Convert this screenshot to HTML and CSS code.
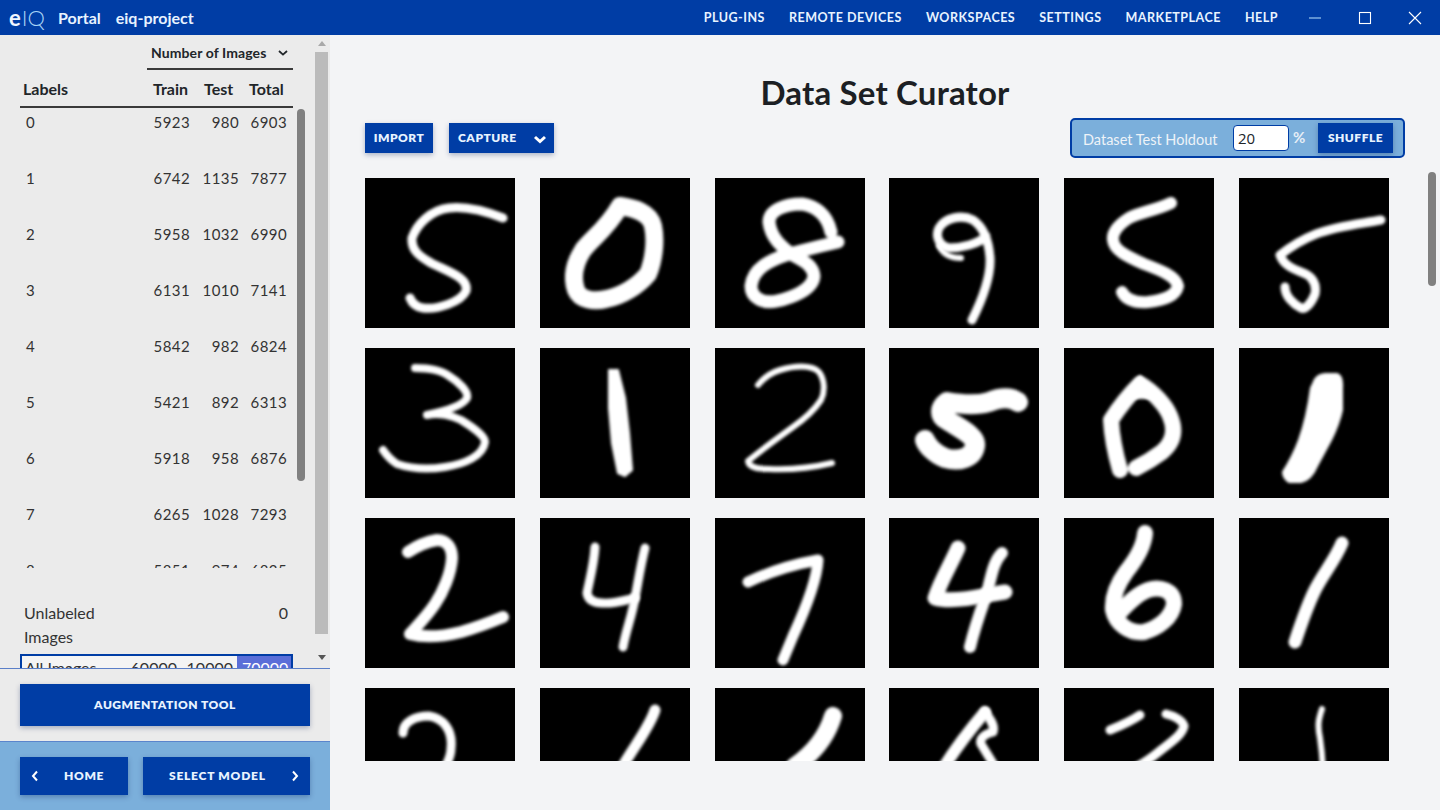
FILE: index.html
```html
<!DOCTYPE html>
<html lang="en">
<head>
<meta charset="utf-8">
<title>eIQ Portal</title>
<link rel="stylesheet" href="styles.css">
</head>
<body>
<div class="app">
  <header class="topbar">
    <div class="logo"><span class="logo-e">e</span><span class="logo-iq">IQ</span></div>
    <span class="crumb crumb-portal">Portal</span>
    <span class="crumb">eiq-project</span>
    <nav class="nav">
      <a>PLUG-INS</a><a>REMOTE DEVICES</a><a>WORKSPACES</a><a>SETTINGS</a><a>MARKETPLACE</a><a>HELP</a>
    </nav>
    <div class="winctl">
      <svg class="winicon" viewBox="0 0 14 14"><path d="M1 7h12" stroke="#9cc8ee" stroke-width="1.2" fill="none"/></svg>
      <svg class="winicon" viewBox="0 0 14 14"><rect x="1.5" y="1.5" width="11" height="11" stroke="#fff" stroke-width="1.1" fill="none"/></svg>
      <svg class="winicon" viewBox="0 0 14 14"><path d="M1 1l12 12M13 1L1 13" stroke="#fff" stroke-width="1.1" fill="none"/></svg>
    </div>
  </header>
  <div class="body">
    <aside class="side">
      <div class="side-top">
        <div class="panel">
          <div class="sortbar"><span>Number of Images</span>
            <svg class="sortchev" viewBox="0 0 10 6"><path d="M1 1l4 3.6L9 1" fill="none" stroke="#212529" stroke-width="1.8"/></svg>
          </div>
          <div class="headrow">
            <span class="h-label">Labels</span><span class="h-train">Train</span><span class="h-test">Test</span><span class="h-total">Total</span>
          </div>
          <div class="list">
            <div class="row"><span>0</span><span>5923</span><span>980</span><span>6903</span></div>
            <div class="row"><span>1</span><span>6742</span><span>1135</span><span>7877</span></div>
            <div class="row"><span>2</span><span>5958</span><span>1032</span><span>6990</span></div>
            <div class="row"><span>3</span><span>6131</span><span>1010</span><span>7141</span></div>
            <div class="row"><span>4</span><span>5842</span><span>982</span><span>6824</span></div>
            <div class="row"><span>5</span><span>5421</span><span>892</span><span>6313</span></div>
            <div class="row"><span>6</span><span>5918</span><span>958</span><span>6876</span></div>
            <div class="row"><span>7</span><span>6265</span><span>1028</span><span>7293</span></div>
            <div class="row"><span>8</span><span>5851</span><span>974</span><span>6825</span></div>
            <div class="row"><span>9</span><span>5949</span><span>1009</span><span>6958</span></div>
            <div class="thinbar"></div>
          </div>
          <div class="unlabeled"><span class="un-text">Unlabeled Images</span><span class="un-val">0</span></div>
          <div class="allrow"><span class="all-name">All Images</span><span class="all-n">60000</span><span class="all-n">10000</span><span class="all-total">70000</span></div>
        </div>
        <div class="rail">
          <i class="tri-up"></i>
          <div class="rail-thumb"></div>
          <i class="tri-down"></i>
        </div>
      </div>
      <div class="aug"><button class="btn btn-aug">AUGMENTATION TOOL</button></div>
      <div class="navfoot">
        <button class="btn btn-home">
          <svg class="navchev" viewBox="0 0 8 12"><path d="M6 1.5L2 6l4 4.5" fill="none" stroke="#fff" stroke-width="2"/></svg>
          <span>HOME</span>
        </button>
        <button class="btn btn-model">
          <span>SELECT MODEL</span>
          <svg class="navchev" viewBox="0 0 8 12"><path d="M2 1.5L6 6l-4 4.5" fill="none" stroke="#fff" stroke-width="2"/></svg>
        </button>
      </div>
    </aside>
    <main class="main">
      <h1 class="title">Data Set Curator</h1>
      <div class="toolbar">
        <div class="tools-left">
          <button class="btn btn-import">IMPORT</button>
          <button class="btn btn-capture"><span>CAPTURE</span>
            <svg class="capchev" viewBox="0 0 14 9"><path d="M2 2l5 4.5L12 2" fill="none" stroke="#fff" stroke-width="3"/></svg>
          </button>
        </div>
        <div class="holdout">
          <span class="holdout-label">Dataset Test Holdout</span>
          <input class="holdout-input" type="text" value="20">
          <span class="holdout-pct">%</span>
          <button class="btn btn-shuffle">SHUFFLE</button>
        </div>
      </div>
      <div class="gallery">
        <svg class="tile" viewBox="0 0 150 150"><path class="d" stroke-width="9" d="M138 40C120 33 100 28 84 30C66 32 52 46 47 60C46 72 54 78 66 85C84 94 104 100 101 113C96 124 72 132 58 130C51 129 47 125 45 120"/></svg>
        <svg class="tile" viewBox="0 0 150 150"><path class="d" stroke-width="18" d="M80 28C66 52 52 60 43 72C34 86 32 100 36 112C40 122 54 124 66 121C82 118 98 108 108 96C114 82 116 62 113 48C110 34 94 30 80 28Z"/></svg>
        <svg class="tile" viewBox="0 0 150 150"><path class="d" stroke-width="13" d="M123 64C105 68 90 72 74 76C55 82 38 90 36 108C36 120 48 126 62 123C76 120 98 112 99 98C98 86 86 82 76 76C66 68 56 60 54 44C54 32 70 26 87 26C100 28 112 36 116 54"/></svg>
        <svg class="tile" viewBox="0 0 150 150"><path class="d" stroke-width="9" d="M97 58C90 66 72 70 60 70C50 68 46 58 50 50C56 40 72 36 84 42C96 50 100 66 101 80C102 100 92 124 83 142"/><path class="d" stroke-width="6" d="M50 68C54 76 62 80 72 80"/></svg>
        <svg class="tile" viewBox="0 0 150 150"><path class="d" stroke-width="12" d="M107 25C90 33 76 34 65 40C54 47 48 55 49 62C50 72 62 78 80 86C96 92 112 98 114 108C112 118 100 122 84 124C70 125 62 122 58 114"/></svg>
        <svg class="tile" viewBox="0 0 150 150"><path class="d" stroke-width="9" d="M142 42C120 46 98 48 77 56C62 62 50 70 41 77C44 86 52 90 62 94C74 98 78 106 76 116C72 126 66 132 62 130C54 126 46 118 46 109"/></svg>

        <svg class="tile" viewBox="0 0 150 150"><path class="d" stroke-width="8" d="M50 20C62 20 76 22 84 28C94 34 104 44 102 50C98 58 76 64 62 67C74 64 88 68 96 72C106 78 120 88 120 94C118 108 100 116 80 119C62 122 44 120 32 116C26 112 22 108 18 102"/></svg>
        <svg class="tile" viewBox="0 0 150 150"><polygon class="fillg" points="69,22 78,22 85,50 89,85 92,122 85,128 78,125 72,95 69,60"/></svg>
        <svg class="tile" viewBox="0 0 150 150"><path class="d" stroke-width="6" d="M43 37C50 28 58 24 65 22C78 18 96 16 104 24C110 32 110 44 106 52C98 64 88 72 78 79C60 92 44 104 33 113C34 120 44 121 54 121C76 122 96 120 117 115"/></svg>
        <svg class="tile" viewBox="0 0 150 150"><path class="d" stroke-width="20" d="M129 54C120 48 110 50 100 54C86 58 70 56 58 54C50 60 50 68 58 72C70 80 88 88 86 98C84 110 70 114 56 110C46 106 38 98 36 92"/></svg>
        <svg class="tile" viewBox="0 0 150 150"><path class="d" stroke-width="16" d="M56 122C52 108 48 92 47 72C56 58 68 44 76 36C90 44 102 58 106 68C112 82 110 94 98 104C90 110 80 116 72 120"/><polygon class="fillg" points="76,28 62,50 90,50"/></svg>
        <svg class="tile" viewBox="0 0 150 150"><path class="fillg" d="M74 36Q76 27 86 26L98 26Q104 28 103 40L103 62Q100 76 92 92L78 118Q72 132 62 134L50 134Q44 130 44 124Q54 108 60 92Q68 70 72 40Z"/></svg>

        <svg class="tile" viewBox="0 0 150 150"><path class="d" stroke-width="12" d="M43 34C52 28 60 24 72 22C82 22 87 30 87 40C86 56 78 74 70 86C62 98 52 108 45 116C60 120 80 118 96 114C110 110 126 104 138 99"/></svg>
        <svg class="tile" viewBox="0 0 150 150"><path class="d" stroke-width="9" d="M55 29C54 46 50 60 47 75C48 82 54 85 62 85C74 86 86 82 95 80"/><path class="d" stroke-width="9" d="M105 30C100 50 98 65 95 80C92 98 86 112 83 129"/></svg>
        <svg class="tile" viewBox="0 0 150 150"><path class="d" stroke-width="11" d="M33 64C54 54 80 46 103 42C102 62 90 92 78 118L68 142"/></svg>
        <svg class="tile" viewBox="0 0 150 150"><path class="d" stroke-width="15" d="M69 30C62 46 52 62 46 80C60 84 84 80 98 77L116 74"/><path class="d" stroke-width="12" d="M113 35C104 44 102 60 98 75C92 92 86 108 81 129"/></svg>
        <svg class="tile" viewBox="0 0 150 150"><path class="d" stroke-width="16" d="M81 15C80 30 70 44 62 54C52 68 48 80 49 92C52 106 66 116 80 114C94 110 108 100 110 86C110 72 96 68 84 72C72 76 62 88 53 97"/></svg>
        <svg class="tile" viewBox="0 0 150 150"><path class="d" stroke-width="13" d="M103 25C96 42 84 56 76 72C68 88 62 106 56 124"/></svg>

        <svg class="tile" viewBox="0 0 150 150"><path class="d" stroke-width="9" d="M38 45C38 34 50 28 64 28C78 30 88 42 86 60C86 70 80 80 72 92"/></svg>
        <svg class="tile" viewBox="0 0 150 150"><path class="d" stroke-width="11" d="M115 22C110 38 96 56 84 76L72 100"/></svg>
        <svg class="tile" viewBox="0 0 150 150"><path class="d" stroke-width="18" d="M118 28C112 48 100 64 80 78L70 95"/></svg>
        <svg class="tile" viewBox="0 0 150 150"><path class="d" stroke-width="12" d="M96 24C84 38 66 60 48 90"/><path class="d" stroke-width="9" d="M96 24C102 32 106 38 104 44C96 46 90 50 92 56C98 66 106 78 112 90"/></svg>
        <svg class="tile" viewBox="0 0 150 150"><path class="d" stroke-width="9" d="M46 42C56 38 66 34 76 27"/><path class="d" stroke-width="9" d="M102 26C110 28 118 32 120 38C118 48 104 56 92 66C80 76 66 82 56 90"/></svg>
        <svg class="tile" viewBox="0 0 150 150"><path class="d" stroke-width="6" d="M83 21C80 30 78 36 81 50C83 64 84 78 84 90"/></svg>
      </div>
      <div class="pagebar"></div>
    </main>
  </div>
</div>
</body>
</html>
```
FILE: styles.css
```css
* { box-sizing: border-box; }
html, body { margin: 0; height: 100%; overflow: hidden; }
body { font-family: "Lato", "Open Sans", sans-serif; color: #212529; background: #f3f4f6; }
.app { display: flex; flex-direction: column; width: 1440px; height: 810px; }

.topbar { display: flex; align-items: center; height: 35px; flex: none; background: #003da5; color: #e8f3ff; }
.logo { width: 58px; padding-left: 9px; font-size: 22px; line-height: 35px; white-space: nowrap; }
.logo-e { font-weight: 700; color: #f0f6ff; }
.logo-iq { font-weight: 300; color: #a9d2f5; margin-left: 1px; }
.crumb { font-size: 16px; font-weight: 700; }
.crumb-portal { margin-right: 15px; }
.nav { margin-left: auto; display: flex; gap: 24px; font-size: 12.5px; font-weight: 700; letter-spacing: .5px; }
.winctl { display: flex; gap: 36px; margin-left: 30px; padding-right: 18px; }
.winicon { width: 14px; height: 14px; display: block; }

.body { display: flex; flex: 1; min-height: 0; }
.side { width: 330px; flex: none; display: flex; flex-direction: column; background: #ebebeb; }
.side-top { height: 633px; flex: none; display: flex; overflow: hidden; }
.panel { width: 315px; flex: none; overflow: hidden; }
.sortbar { margin-left: 147px; width: 146px; height: 35px; padding: 1px 5px 0 4px; display: flex; align-items: center; justify-content: space-between; border-bottom: 2px solid #3a3a3a; font-size: 14px; font-weight: 700; letter-spacing: .1px; }
.sortchev { width: 10px; height: 6px; display: block; margin-top: 2px; }
.headrow { margin-left: 20px; width: 273px; height: 38px; border-bottom: 2px solid #3a3a3a; display: flex; align-items: center; font-size: 16px; font-weight: 700; }
.h-label { margin-left: 3px; width: 130px; }
.h-train { width: 51px; }
.h-test { width: 45px; }
.list { height: 460px; position: relative; overflow: hidden; }
.row { display: grid; grid-template-columns: 124px 40px 49px 48px; margin-left: 26px; height: 56px; line-height: 28px; font-size: 15px; letter-spacing: .4px; color: #333; }
.row span:not(:first-child) { text-align: right; }
.thinbar { position: absolute; left: 297px; top: 1px; width: 8px; height: 372px; border-radius: 4px; background: #808080; }
.unlabeled { margin: 33px 27px 0 24px; display: flex; justify-content: space-between; align-items: flex-start; font-size: 16px; line-height: 24px; color: #333; height: 48px; }
.un-text { width: 90px; }
.allrow { margin: 5px 0 0 20px; width: 273px; height: 30px; border: 2px solid #003da5; background: #f4f4f4; display: flex; font-size: 16px; line-height: 24px; color: #333; }
.all-name { width: 100px; padding-left: 3px; white-space: nowrap; }
.all-n { width: 55px; text-align: right; }
.all-n + .all-n { width: 56px; margin-right: 4px; }
.all-total { width: 54px; background: #5a6ed8; color: #fff; padding-left: 5px; }

.rail { width: 13px; flex: none; display: flex; flex-direction: column; align-items: center; padding-top: 6px; }
.tri-up { width: 0; height: 0; border: 4px solid transparent; border-top: 0; border-bottom: 5px solid #a8a8a8; }
.rail-thumb { width: 13px; height: 582px; margin-top: 6px; background: #bbb; }
.tri-down { width: 0; height: 0; margin-top: 21px; border: 4px solid transparent; border-bottom: 0; border-top: 5px solid #555; }

.btn { border: 0; margin: 0; padding: 0 0 2px; font-family: inherit; font-weight: 800; font-size: 12px; letter-spacing: .5px; color: #e8f3ff; background: #003da5; box-shadow: 0 2px 5px rgba(0, 30, 90, .3); display: flex; align-items: center; justify-content: center; }
.aug { height: 73px; flex: none; padding: 15px 20px; border-top: 1px solid #5b7fc8; }
.btn-aug { width: 290px; height: 42px; }
.navfoot { flex: 1; background: #7bafdb; border-top: 1px solid #5b85cc; padding: 15px 20px; display: flex; gap: 15px; }
.btn-home { width: 108px; height: 38px; padding: 0 24px 2px 11px; justify-content: space-between; letter-spacing: .6px; }
.btn-model { width: 167px; height: 38px; padding: 0 11px 2px 26px; justify-content: space-between; letter-spacing: .75px; }
.navchev { width: 8px; height: 12px; display: block; margin-top: 2px; }

.main { flex: 1; position: relative; padding: 36px 35px 0; min-width: 0; background: #f3f4f6; }
.title { margin: 0; height: 47px; text-align: center; font-size: 33px; letter-spacing: .17px; line-height: 42px; font-weight: 700; color: #1c1f24; }
.toolbar { display: flex; justify-content: space-between; align-items: center; height: 40px; }
.tools-left { display: flex; gap: 16px; }
.btn-import { width: 68px; height: 30px; }
.btn-capture { width: 105px; height: 30px; justify-content: space-between; padding: 0 7px 2px 9px; }
.capchev { width: 14px; height: 9px; display: block; margin-top: 4px; }
.holdout { width: 335px; height: 40px; display: flex; align-items: center; background: #7bafdb; border: 2px solid #003da5; border-radius: 5px; padding-left: 11px; }
.holdout-label { width: 150px; font-size: 14.5px; color: #eef3f8; white-space: nowrap; padding-top: 2px; }
.holdout-input { width: 56px; height: 26px; padding: 0 4px; border: 1px solid #003da5; border-radius: 4px; background: #fff; font-family: "Open Sans", sans-serif; font-size: 15px; color: #212529; outline: 0; }
.holdout-pct { width: 29px; padding: 0 0 2px 4px; font-size: 15px; font-weight: 700; color: #e6eef6; }
.btn-shuffle { width: 75px; height: 30px; }

.gallery { margin-top: 20px; width: 1024px; height: 583px; overflow: hidden; display: grid; grid-template-columns: repeat(6, 150px); column-gap: 24.8px; row-gap: 20px; align-content: start; }
.tile { display: block; width: 150px; height: 150px; background: #000; }
.d { fill: none; stroke: #fff; stroke-linecap: round; stroke-linejoin: round; filter: blur(1.5px); }
.fillg { fill: #fff; stroke: #fff; stroke-width: 2; stroke-linejoin: round; filter: blur(1.5px); }
.pagebar { position: absolute; right: 4px; top: 137px; width: 8px; height: 114px; border-radius: 4px; background: #808080; }
```
